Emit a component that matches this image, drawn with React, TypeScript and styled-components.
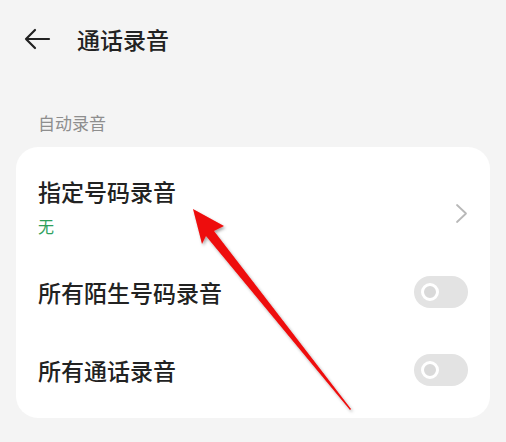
import React from "react";
import styled, { createGlobalStyle } from "styled-components";

const GlobalStyle = createGlobalStyle`
  html, body {
    margin: 0;
    padding: 0;
    background: #f4f4f4;
  }
  body {
    font-family: "Noto Sans CJK SC", "Noto Sans", sans-serif;
  }
`;

const Page = styled.div`
  position: relative;
  width: 506px;
  height: 442px;
  overflow: hidden;
  background: #f4f4f4;
`;

const Header = styled.div`
  display: flex;
  align-items: center;
  height: 80px;
  padding-left: 23px;
`;

const BackIcon = styled.svg`
  width: 28px;
  height: 24px;
  margin-right: 26px;
  margin-top: -2px;
`;

const Title = styled.div`
  font-size: 23px;
  color: #222;
  font-weight: 500;
  margin-top: -2px;
`;

const SectionLabel = styled.div`
  padding-left: 38px;
  font-size: 17px;
  color: #8e8e8e;
  line-height: 22px;
  margin-top: 32px;
  margin-bottom: 13px;
`;

const Card = styled.div`
  margin: 0 16px;
  background: #fff;
  border-radius: 22px;
  padding-bottom: 9px;
`;

const Row = styled.div<{ $tall?: boolean }>`
  display: flex;
  align-items: center;
  justify-content: space-between;
  padding: ${(p) => (p.$tall ? "30px 22px 17px 22px" : "0 22px 0 22px")};
  height: ${(p) => (p.$tall ? "auto" : "78px")};
  box-sizing: border-box;
`;

const TextCol = styled.div`
  display: flex;
  flex-direction: column;
`;

const RowTitle = styled.div`
  font-size: 23px;
  line-height: 29px;
  color: #222;
  font-weight: 500;
`;

const RowSub = styled.div`
  font-size: 16px;
  line-height: 20px;
  color: #2e9f5c;
  margin-top: 10px;
`;

const Chevron = styled.svg`
  width: 13px;
  height: 21px;
  margin-top: 14px;
`;

const Toggle = styled.div`
  width: 54px;
  height: 32px;
  border-radius: 16px;
  background: #e3e3e3;
  display: flex;
  align-items: center;
  padding-left: 7px;
  box-sizing: border-box;
`;

const Knob = styled.div`
  width: 12px;
  height: 12px;
  border-radius: 50%;
  border: 3px solid #fff;
  background: #d9d9d9;
`;

const ArrowOverlay = styled.svg`
  position: absolute;
  left: 0;
  top: 0;
  pointer-events: none;
`;

export default function App() {
  return (
    <Page>
      <GlobalStyle />
      <Header>
        <BackIcon viewBox="0 0 28 24">
          <path
            d="M26 12H3M12 3L3 12L12 21"
            fill="none"
            stroke="#222"
            strokeWidth="2.2"
            strokeLinecap="round"
            strokeLinejoin="round"
          />
        </BackIcon>
        <Title>通话录音</Title>
      </Header>
      <SectionLabel>自动录音</SectionLabel>
      <Card>
        <Row $tall>
          <TextCol>
            <RowTitle>指定号码录音</RowTitle>
            <RowSub>无</RowSub>
          </TextCol>
          <Chevron viewBox="0 0 13 21">
            <path d="M2 2L11 10.5L2 19" fill="none" stroke="#b8b8b8" strokeWidth="1.8" strokeLinecap="round" strokeLinejoin="round" />
          </Chevron>
        </Row>
        <Row>
          <RowTitle>所有陌生号码录音</RowTitle>
          <Toggle>
            <Knob />
          </Toggle>
        </Row>
        <Row>
          <RowTitle>所有通话录音</RowTitle>
          <Toggle>
            <Knob />
          </Toggle>
        </Row>
      </Card>
      <ArrowOverlay width="506" height="442" viewBox="0 0 506 442">
        <defs>
          <filter id="sh" x="-20%" y="-20%" width="140%" height="140%">
            <feDropShadow dx="1.5" dy="2" stdDeviation="1.5" floodColor="#000" floodOpacity="0.35" />
          </filter>
        </defs>
        <g filter="url(#sh)">
          <path
            d="M193 209 L224 226 L214 231 L351 409 L350 410 L206 236 L202 244 Z"
            fill="#ee0a0a"
          />
        </g>
      </ArrowOverlay>
    </Page>
  );
}
